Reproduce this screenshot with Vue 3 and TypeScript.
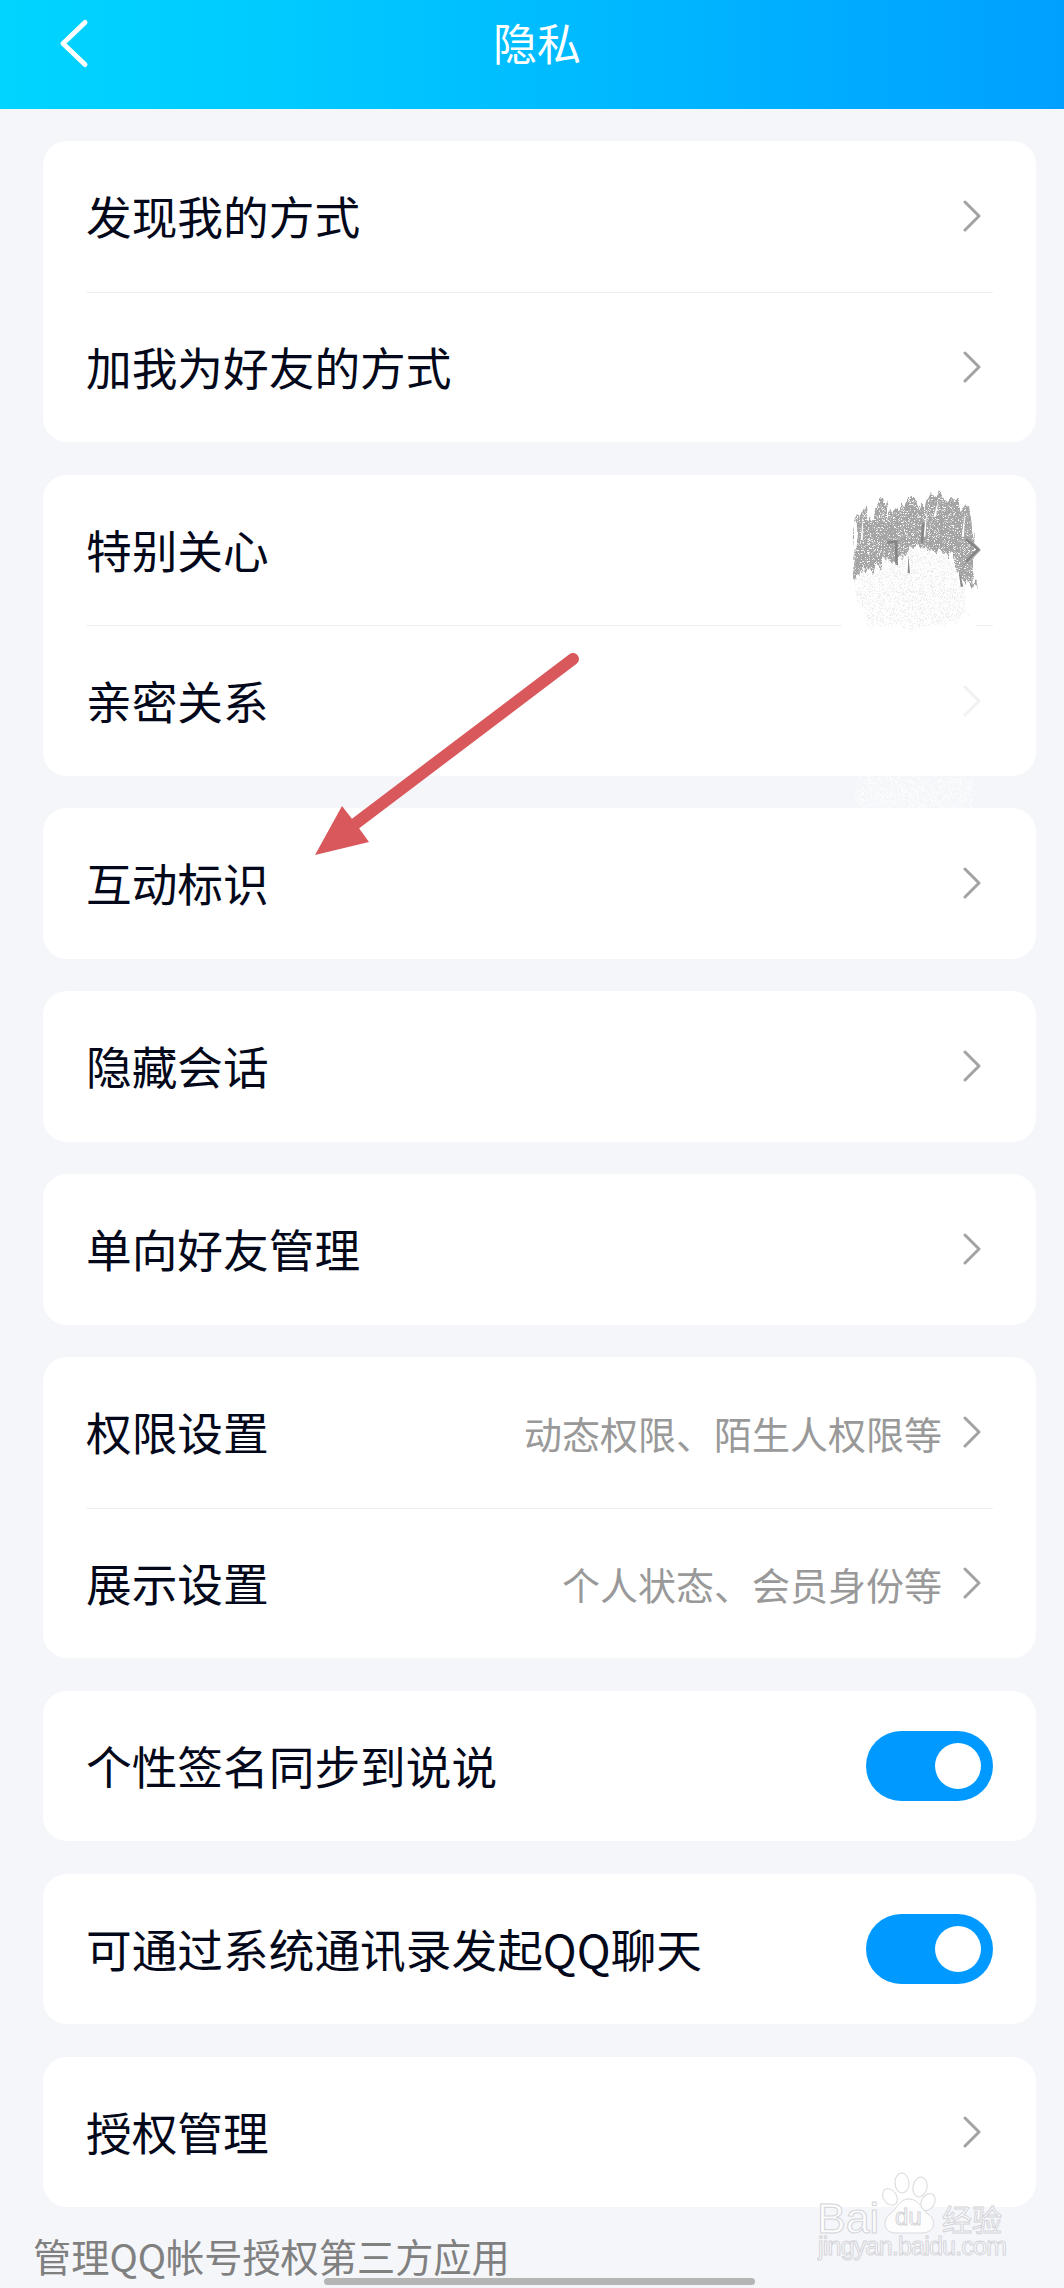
<template>
  <div class="page">
    <header class="nav">
      <svg class="back" width="40" height="60" viewBox="0 0 40 60">
        <path d="M33 9 L11 30 L33 51" fill="none" stroke="#fff" stroke-width="5" stroke-linecap="round" stroke-linejoin="round" />
      </svg>
      <h1 class="title">隐私</h1>
    </header>

    <main class="list">
      <section v-for="(group, i) in groups" :key="i" class="card">
        <div v-for="row in group" :key="row.label" class="row">
          <span class="label">{{ row.label }}</span>
          <span v-if="row.hint" class="hint">{{ row.hint }}</span>
          <span v-if="row.on" class="toggle"><i class="knob"></i></span>
          <svg v-else class="chevron" :class="{ erased: row.erased }" width="18" height="32" viewBox="0 0 18 32">
            <path d="M2 2 L16 16 L2 30" fill="none" stroke="currentColor" stroke-width="3" stroke-linecap="round" stroke-linejoin="round" />
          </svg>
        </div>
      </section>
    </main>

    <p class="footnote">管理QQ帐号授权第三方应用</p>

    <!-- annotation arrow -->
    <svg class="arrow" width="280" height="215" viewBox="0 0 280 215">
      <path d="M264 14 L42 182" fill="none" stroke="#d9585c" stroke-width="12" stroke-linecap="round" />
      <path d="M6 210 L33 161 L47 179 L60 197 Z" fill="#d9585c" />
    </svg>

    <!-- scribbled-out area -->
    <svg class="smudge" width="150" height="340" viewBox="0 0 450 1020">
      <defs>
        <filter id="streak" x="-10%" y="-10%" width="120%" height="120%">
          <feTurbulence type="fractalNoise" baseFrequency="0.07 0.012" numOctaves="3" seed="7" result="warp" />
          <feDisplacementMap in="SourceGraphic" in2="warp" scale="50" xChannelSelector="R" yChannelSelector="G" result="shape" />
          <feTurbulence type="fractalNoise" baseFrequency="0.6 0.55" numOctaves="2" seed="3" result="n" />
          <feColorMatrix in="n" type="matrix" values="0 0 0 0 0  0 0 0 0 0  0 0 0 0 0  0 0 0 6 -1.7" result="m" />
          <feComposite in="shape" in2="m" operator="in" />
        </filter>
        <filter id="pale" x="-10%" y="-10%" width="120%" height="120%">
          <feTurbulence type="fractalNoise" baseFrequency="0.06 0.01" numOctaves="3" seed="11" result="warp" />
          <feDisplacementMap in="SourceGraphic" in2="warp" scale="45" xChannelSelector="R" yChannelSelector="G" result="shape" />
          <feTurbulence type="fractalNoise" baseFrequency="0.7 0.65" numOctaves="2" seed="5" result="n" />
          <feColorMatrix in="n" type="matrix" values="0 0 0 0 0  0 0 0 0 0  0 0 0 0 0  0 0 0 5 -2.4" result="m" />
          <feComposite in="shape" in2="m" operator="in" />
        </filter>
        <filter id="soft"><feGaussianBlur stdDeviation="1.5" /></filter>
      </defs>
      <rect x="5" y="425" width="405" height="30" fill="#fff" />
      <path d="M48 305 L42 290 L44 180 L50 115 L75 85 L85 130 L115 70 L135 65 L150 110 L180 75 L205 60 L235 60 L245 80 L265 60 L290 40 L310 55 L350 55 L365 85 L385 75 L395 120 L398 180 L395 240 L415 325 L390 300 L370 320 L350 260 L330 225 L290 215 L250 200 L200 205 L170 260 L130 235 L100 285 L70 265 Z" fill="#a4a4a4" filter="url(#streak)" />
      <path d="M70 100 L62 180 L68 180 Z M262 85 L248 170 L256 170 Z M295 60 L280 110 L288 110 Z M375 95 L365 170 L372 170 Z" fill="#fff" />
      <g filter="url(#soft)" fill="none" stroke="#858585" stroke-width="8">
        <path d="M378 178 L414 208 L378 245" />
        <path d="M142 188 L168 184 L170 255" />
        <path d="M250 130 L246 190" />
      </g>
      <path d="M42 300 L70 265 L100 285 L130 235 L170 260 L200 205 L250 200 L290 215 L330 225 L350 260 L370 320 L385 405 L330 430 L260 440 L100 440 L60 370 Z" fill="#ebebeb" filter="url(#pale)" />
      <path d="M355 260 L370 320 L362 320 Z M205 225 L210 280 L203 280 Z" fill="#8c8c8c" />
      <path d="M50 890 L400 890 L395 985 L300 1000 L190 1015 L60 985 Z" fill="#fff" filter="url(#pale)" />
    </svg>

    <!-- baidu watermark -->
    <svg class="watermark" width="200" height="100" viewBox="0 0 200 100">
      <g class="wm-shape">
        <ellipse cx="85" cy="11" rx="7" ry="10" transform="rotate(-5 85 11)" />
        <ellipse cx="103" cy="15" rx="7" ry="10" transform="rotate(12 103 15)" />
        <ellipse cx="73" cy="25" rx="6.5" ry="9" transform="rotate(-35 73 25)" />
        <ellipse cx="111" cy="30" rx="6.5" ry="9" transform="rotate(30 111 30)" />
        <path d="M92 27 C102 27 104 37 111 42 C120 48 118 61 105 61 L79 61 C66 61 65 48 73 42 C80 37 82 27 92 27 Z" />
      </g>
      <text class="wm-text" x="0" y="61" font-size="43">Bai</text>
      <text class="wm-text" x="78" y="53" font-size="24">du</text>
      <text class="wm-text" x="125" y="59" font-size="30">经验</text>
      <text class="wm-text" x="1" y="83" font-size="25" textLength="189">jingyan.baidu.com</text>
    </svg>

    <div class="home-bar"></div>
  </div>
</template>

<script setup lang="ts">
interface Row {
  label: string
  hint?: string
  on?: boolean
  erased?: boolean
}

const groups: Row[][] = [
  [{ label: '发现我的方式' }, { label: '加我为好友的方式' }],
  [{ label: '特别关心' }, { label: '亲密关系', erased: true }],
  [{ label: '互动标识' }],
  [{ label: '隐藏会话' }],
  [{ label: '单向好友管理' }],
  [
    { label: '权限设置', hint: '动态权限、陌生人权限等' },
    { label: '展示设置', hint: '个人状态、会员身份等' }
  ],
  [{ label: '个性签名同步到说说', on: true }],
  [{ label: '可通过系统通讯录发起QQ聊天', on: true }],
  [{ label: '授权管理' }]
]
</script>

<style>
html,
body {
  background: #f5f6fa;
}
</style>

<style scoped>
.page {
  position: relative;
  width: 1064px;
  height: 2288px;
  overflow: hidden;
  background: #f5f6fa;
  font-family: "Noto Sans CJK SC", "Noto Sans", sans-serif;
}

.nav {
  display: grid;
  grid-template-columns: 1fr auto 1fr;
  align-items: center;
  height: 109px;
  padding: 0 0 25px 52px;
  box-sizing: border-box;
  background: linear-gradient(90deg, #00d4ff, #00cbff 25%, #00a0ff);
}

.back {
  transform: translateY(1.5px);
}

.title {
  margin: 0;
  transform: translateX(-21px);
  font-size: 44px;
  font-weight: 400;
  line-height: 60px;
  color: #fff;
}

.list {
  display: flex;
  flex-direction: column;
  gap: 32.5px;
  padding: 32px 28px 0 43px;
}

.card {
  background: #fff;
  border-radius: 24px;
  padding: 0 43px;
}

.row {
  display: flex;
  align-items: center;
  height: 150.5px;
  box-sizing: border-box;
}

.row + .row {
  border-top: 1px solid #eeeff2;
}

.label {
  flex: 1;
  padding-bottom: 2px;
  font-size: 45.7px;
  line-height: 60px;
  color: #03081a;
  white-space: nowrap;
}

.hint {
  margin-right: 21px;
  font-size: 38px;
  color: #999;
  white-space: nowrap;
}

.chevron {
  flex: none;
  margin-right: 12px;
  color: #a3a3a3;
}

.chevron.erased {
  color: #f1f1f1;
}

.toggle {
  flex: none;
  position: relative;
  width: 127px;
  height: 70px;
  border-radius: 35px;
  background: #0099ff;
}

.knob {
  position: absolute;
  top: 12px;
  right: 12px;
  width: 46px;
  height: 46px;
  border-radius: 50%;
  background: #fff;
}

.footnote {
  margin: 24px 0 0 33px;
  font-size: 38.2px;
  line-height: 50px;
  color: #808080;
  white-space: nowrap;
}

.arrow {
  position: absolute;
  left: 309px;
  top: 645px;
}

.smudge {
  position: absolute;
  left: 840px;
  top: 480px;
}

.watermark {
  position: absolute;
  left: 817px;
  top: 2172px;
}

.wm-shape {
  fill: rgba(255, 255, 255, 0.75);
  stroke: #d9d9de;
  stroke-width: 1;
}

.wm-text {
  font-family: "Liberation Sans", "Noto Sans CJK SC", sans-serif;
  fill: rgba(255, 255, 255, 0.8);
  stroke: #d4d4d9;
  stroke-width: 1;
}

.home-bar {
  position: absolute;
  left: 324px;
  top: 2278px;
  width: 431px;
  height: 7px;
  border-radius: 4px;
  background: #b5b5b5;
}
</style>
